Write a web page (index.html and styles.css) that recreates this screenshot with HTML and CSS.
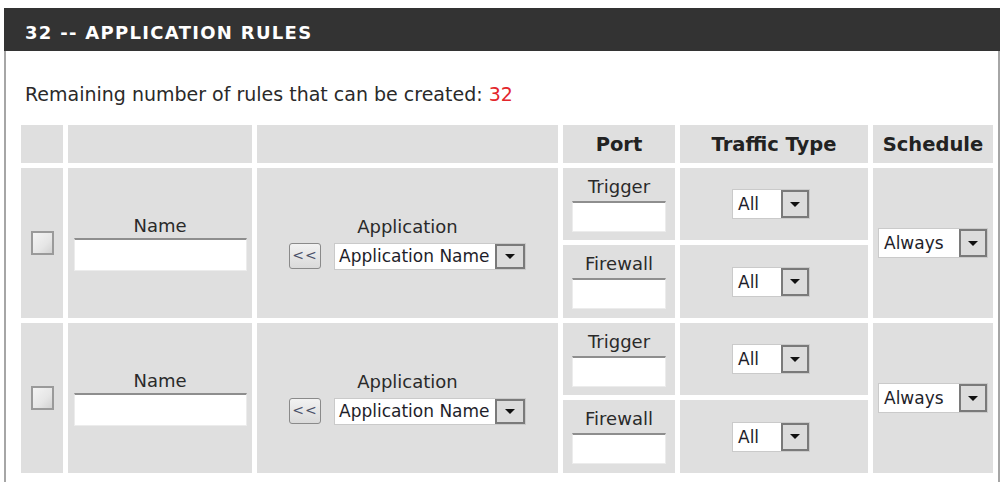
FILE: index.html
```html
<!DOCTYPE html>
<html lang="en">
<head>
<meta charset="utf-8">
<title>Application Rules</title>
<link rel="stylesheet" href="styles.css">
</head>
<body>
<div class="panel">
  <div class="hdr">32 -- APPLICATION RULES</div>
  <div class="body">
    <p class="remain">Remaining number of rules that can be created: <span class="red">32</span></p>
    <table class="rules">
      <colgroup>
        <col class="c1"><col class="c2"><col class="c3"><col class="c4"><col class="c5"><col class="c6">
      </colgroup>
      <tr class="head">
        <th></th><th></th><th></th><th>Port</th><th>Traffic Type</th><th>Schedule</th>
      </tr>
      <tr class="ra">
        <td rowspan="2"><span class="chk"></span></td>
        <td rowspan="2"><div class="lbl">Name</div><div class="inp name"></div></td>
        <td rowspan="2"><div class="lbl">Application</div>
          <div class="app"><span class="btn">&lt;&lt;</span><div class="sel appsel"><span class="val">Application Name</span><span class="arr"><i></i></span></div></div>
        </td>
        <td><div class="lbl">Trigger</div><div class="inp port"></div></td>
        <td><div class="sel allsel"><span class="val">All</span><span class="arr"><i></i></span></div></td>
        <td rowspan="2"><div class="sel alwsel"><span class="val">Always</span><span class="arr"><i></i></span></div></td>
      </tr>
      <tr class="rb">
        <td><div class="lbl">Firewall</div><div class="inp port"></div></td>
        <td><div class="sel allsel"><span class="val">All</span><span class="arr"><i></i></span></div></td>
      </tr>
      <tr class="ra">
        <td rowspan="2"><span class="chk"></span></td>
        <td rowspan="2"><div class="lbl">Name</div><div class="inp name"></div></td>
        <td rowspan="2"><div class="lbl">Application</div>
          <div class="app"><span class="btn">&lt;&lt;</span><div class="sel appsel"><span class="val">Application Name</span><span class="arr"><i></i></span></div></div>
        </td>
        <td><div class="lbl">Trigger</div><div class="inp port"></div></td>
        <td><div class="sel allsel"><span class="val">All</span><span class="arr"><i></i></span></div></td>
        <td rowspan="2"><div class="sel alwsel"><span class="val">Always</span><span class="arr"><i></i></span></div></td>
      </tr>
      <tr class="rb">
        <td><div class="lbl">Firewall</div><div class="inp port"></div></td>
        <td><div class="sel allsel"><span class="val">All</span><span class="arr"><i></i></span></div></td>
      </tr>
    </table>
  </div>
</div>
</body>
</html>
```
FILE: styles.css
```css
html, body {
  margin: 0;
  padding: 0;
  background: #fff;
}
body {
  font-family: "DejaVu Sans", Verdana, sans-serif;
  color: #2a2a2a;
}
.panel {
  margin: 8px 6px 0 4px;
  width: 996px;
}
.hdr {
  background: #333333;
  color: #ffffff;
  font-weight: bold;
  font-size: 18px;
  letter-spacing: 1.3px;
  height: 37px;
  line-height: 37px;
  padding: 6px 0 0 21px;
  white-space: nowrap;
}
.body {
  border-left: 2px solid #a6a6a6;
  border-right: 2px solid #a6a6a6;
  padding: 0 0 4px 10px;
}
.remain {
  margin: 0 0 13px 9px;
  padding-top: 30px;
  line-height: 26px;
  font-size: 19px;
  white-space: nowrap;
}
.red { color: #e3262c; }
.rules {
  table-layout: fixed;
  width: 982px;
  border-collapse: separate;
  border-spacing: 5px;
}
.c1 { width: 42px; }
.c2 { width: 184px; }
.c3 { width: 301px; }
.c4 { width: 112px; }
.c5 { width: 188px; }
.c6 { width: 120px; }
.rules th, .rules td {
  background: #dfdfdf;
  padding: 0;
  text-align: center;
  vertical-align: middle;
  font-size: 18px;
}
.rules th {
  height: 38px;
  font-weight: bold;
  font-size: 19.5px;
  color: #222;
}
.ra td { height: 72px; }
.rb td { height: 73px; }
.lbl {
  line-height: 20px;
  height: 20px;
  white-space: nowrap;
}
.chk {
  display: inline-block;
  width: 19px;
  height: 20px;
  border: 2px solid #9a9a9a;
  background: linear-gradient(135deg, #f4f4f4 0%, #e6e6e6 60%, #d2d2d2 100%);
  vertical-align: middle;
}
.inp {
  background: #ffffff;
  border: 1px solid #ececec;
  border-top: 2px solid #8e8e8e;
  box-sizing: border-box;
  margin: 2px auto 0;
}
.inp.name { width: 173px; height: 33px; }
.inp.port { width: 94px; height: 31px; margin-top: 4px; }
.app {
  display: flex;
  justify-content: center;
  align-items: center;
  gap: 13px;
  margin-top: 6px;
}
.btn {
  box-sizing: border-box;
  width: 32px;
  height: 26px;
  border: 1px solid #8a8a8a;
  border-radius: 3px;
  background: linear-gradient(#f2f2f2, #dadada);
  color: #4a5068;
  font-size: 14px;
  line-height: 23px;
  letter-spacing: 1px;
  text-align: center;
}
.sel {
  box-sizing: border-box;
  display: inline-flex;
  align-items: stretch;
  background: #ffffff;
  border: 1px solid #cacaca;
  text-align: left;
  vertical-align: middle;
}
.sel .val {
  flex: 1;
  padding-left: 5px;
  white-space: nowrap;
  overflow: hidden;
  font-size: 17px;
  display: flex;
  align-items: center;
  color: #1e1e2a;
}
.sel .arr {
  box-sizing: border-box;
  flex: none;
  width: 28px;
  border: 2px solid #7a7a7a;
  background: #dcdcdc;
  display: flex;
  align-items: center;
  justify-content: center;
}
.sel .arr i {
  width: 0;
  height: 0;
  border-left: 5px solid transparent;
  border-right: 5px solid transparent;
  border-top: 5px solid #111;
}
.appsel { width: 192px; height: 27px; }
.appsel .val { padding-left: 4px; }
.appsel .arr { width: 30px; }
.allsel { width: 78px; height: 30px; margin-left: -6px; }
.alwsel { width: 110px; height: 30px; }
```
